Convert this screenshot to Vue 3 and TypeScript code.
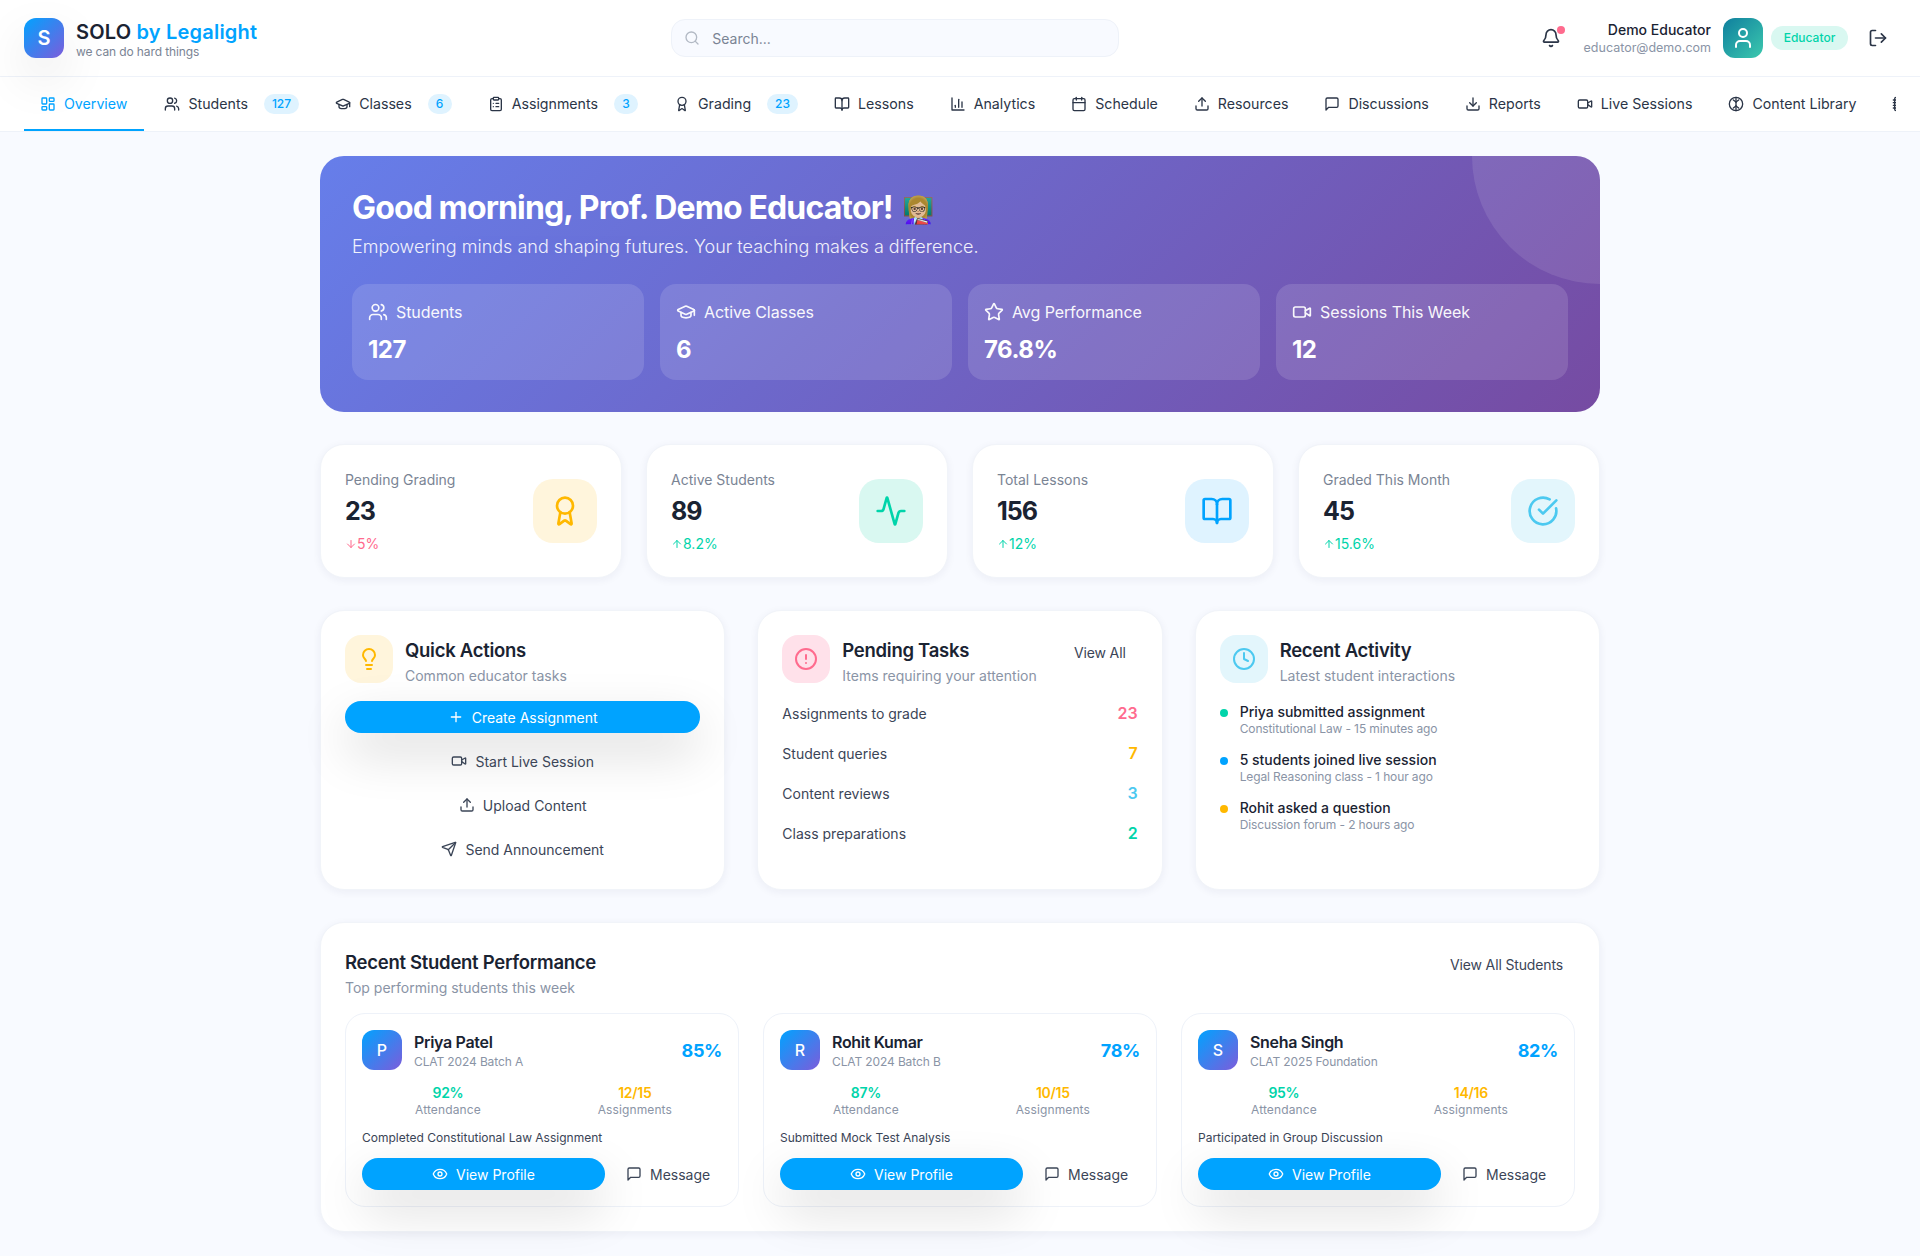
<script setup lang="ts">
import { h } from 'vue'

const icons: Record<string, string> = {
  dashboard: '<rect width="7" height="9" x="3" y="3" rx="1"/><rect width="7" height="5" x="14" y="3" rx="1"/><rect width="7" height="9" x="14" y="12" rx="1"/><rect width="7" height="5" x="3" y="16" rx="1"/>',
  users: '<path d="M16 21v-2a4 4 0 0 0-4-4H6a4 4 0 0 0-4 4v2"/><circle cx="9" cy="7" r="4"/><path d="M22 21v-2a4 4 0 0 0-3-3.87"/><path d="M16 3.13a4 4 0 0 1 0 7.75"/>',
  cap: '<path d="M21.42 10.922a1 1 0 0 0-.019-1.838L12.83 5.18a2 2 0 0 0-1.66 0L2.6 9.08a1 1 0 0 0 0 1.832l8.57 3.908a2 2 0 0 0 1.66 0z"/><path d="M22 10v6"/><path d="M6 12.5V16a6 3 0 0 0 12 0v-3.5"/>',
  clipboard: '<rect width="8" height="4" x="8" y="2" rx="1" ry="1"/><path d="M16 4h2a2 2 0 0 1 2 2v14a2 2 0 0 1-2 2H6a2 2 0 0 1-2-2V6a2 2 0 0 1 2-2h2"/><path d="M12 11h4"/><path d="M12 16h4"/><path d="M8 11h.01"/><path d="M8 16h.01"/>',
  award: '<path d="m15.477 12.89 1.515 8.526a.5.5 0 0 1-.81.47l-3.58-2.687a1 1 0 0 0-1.197 0l-3.586 2.686a.5.5 0 0 1-.81-.469l1.514-8.526"/><circle cx="12" cy="8" r="6"/>',
  book: '<path d="M12 7v14"/><path d="M3 18a1 1 0 0 1-1-1V4a1 1 0 0 1 1-1h5a4 4 0 0 1 4 4 4 4 0 0 1 4-4h5a1 1 0 0 1 1 1v13a1 1 0 0 1-1 1h-6a3 3 0 0 0-3 3 3 3 0 0 0-3-3z"/>',
  chart: '<path d="M3 3v18h18"/><path d="M18 17V9"/><path d="M13 17V5"/><path d="M8 17v-3"/>',
  calendar: '<path d="M8 2v4"/><path d="M16 2v4"/><rect width="18" height="18" x="3" y="4" rx="2"/><path d="M3 10h18"/>',
  upload: '<path d="M21 15v4a2 2 0 0 1-2 2H5a2 2 0 0 1-2-2v-4"/><path d="m17 8-5-5-5 5"/><path d="M12 3v12"/>',
  message: '<path d="M21 15a2 2 0 0 1-2 2H7l-4 4V5a2 2 0 0 1 2-2h14a2 2 0 0 1 2 2z"/>',
  download: '<path d="M21 15v4a2 2 0 0 1-2 2H5a2 2 0 0 1-2-2v-4"/><path d="m7 10 5 5 5-5"/><path d="M12 15V3"/>',
  video: '<path d="m16 13 5.223 3.482a.5.5 0 0 0 .777-.416V7.87a.5.5 0 0 0-.752-.432L16 10.5"/><rect x="2" y="6" width="14" height="12" rx="2"/>',
  brain: '<circle cx="12" cy="12" r="10"/><path d="M12 2v20"/><path d="m12 9-4-3"/><path d="m12 9 4-3"/><path d="m12 15-4 3"/><path d="m12 15 4 3"/>',
  notebook: '<path d="M2 6h4"/><path d="M2 10h4"/><path d="M2 14h4"/><path d="M2 18h4"/><rect width="16" height="20" x="4" y="2" rx="2"/>',
  bell: '<path d="M10.268 21a2 2 0 0 0 3.464 0"/><path d="M3.262 15.326A1 1 0 0 0 4 17h16a1 1 0 0 0 .74-1.673C19.41 13.956 18 12.499 18 8A6 6 0 0 0 6 8c0 4.499-1.411 5.956-2.738 7.326"/>',
  search: '<circle cx="11" cy="11" r="8"/><path d="m21 21-4.3-4.3"/>',
  user: '<path d="M19 21v-2a4 4 0 0 0-4-4H9a4 4 0 0 0-4 4v2"/><circle cx="12" cy="7" r="4"/>',
  logout: '<path d="M9 21H5a2 2 0 0 1-2-2V5a2 2 0 0 1 2-2h4"/><path d="m16 17 5-5-5-5"/><path d="M21 12H9"/>',
  star: '<path d="M11.525 2.295a.53.53 0 0 1 .95 0l2.31 4.679a2.123 2.123 0 0 0 1.595 1.16l5.166.756a.53.53 0 0 1 .294.904l-3.736 3.638a2.123 2.123 0 0 0-.611 1.878l.882 5.14a.53.53 0 0 1-.771.56l-4.618-2.428a2.122 2.122 0 0 0-1.973 0L6.396 21.01a.53.53 0 0 1-.77-.56l.881-5.139a2.122 2.122 0 0 0-.611-1.879L2.16 9.795a.53.53 0 0 1 .294-.906l5.165-.755a2.122 2.122 0 0 0 1.597-1.16z"/>',
  activity: '<path d="M22 12h-2.48a2 2 0 0 0-1.93 1.46l-2.35 8.36a.25.25 0 0 1-.48 0L9.24 2.18a.25.25 0 0 0-.48 0l-2.35 8.36A2 2 0 0 1 4.49 12H2"/>',
  check: '<path d="M21.801 10A10 10 0 1 1 17 3.335"/><path d="m9 11 3 3L22 4"/>',
  bulb: '<path d="M15 14c.2-1 .7-1.7 1.5-2.5 1-.9 1.5-2.2 1.5-3.5A6 6 0 0 0 6 8c0 1 .2 2.2 1.5 3.5.7.7 1.3 1.5 1.5 2.5"/><path d="M9 18h6"/><path d="M10 22h4"/>',
  alert: '<circle cx="12" cy="12" r="10"/><path d="M12 8v4"/><path d="M12 16h.01"/>',
  clock: '<circle cx="12" cy="12" r="10"/><path d="M12 6v6l4 2"/>',
  plus: '<path d="M5 12h14"/><path d="M12 5v14"/>',
  send: '<path d="M14.536 21.686a.5.5 0 0 0 .937-.024l6.5-19a.496.496 0 0 0-.635-.635l-19 6.5a.5.5 0 0 0-.024.937l7.93 3.18a2 2 0 0 1 1.112 1.11z"/><path d="m21.854 2.147-10.94 10.939"/>',
  eye: '<path d="M2.062 12.348a1 1 0 0 1 0-.696 10.75 10.75 0 0 1 19.876 0 1 1 0 0 1 0 .696 10.75 10.75 0 0 1-19.876 0"/><circle cx="12" cy="12" r="3"/>',
  up: '<path d="m5 12 7-7 7 7"/><path d="M12 19V5"/>',
  down: '<path d="M12 5v14"/><path d="m19 12-7 7-7-7"/>',
}

// small inline icon, same 24 grid for all of them
const Icon = (props: { name: string; size?: number }) =>
  h('svg', {
    width: props.size ?? 16,
    height: props.size ?? 16,
    viewBox: '0 0 24 24',
    fill: 'none',
    stroke: 'currentColor',
    'stroke-width': 2,
    'stroke-linecap': 'round',
    'stroke-linejoin': 'round',
    style: 'flex:none;display:block',
    innerHTML: icons[props.name],
  })
Icon.props = ['name', 'size']

const tabs = [
  { label: 'Overview', icon: 'dashboard', active: true },
  { label: 'Students', icon: 'users', badge: '127' },
  { label: 'Classes', icon: 'cap', badge: '6' },
  { label: 'Assignments', icon: 'clipboard', badge: '3' },
  { label: 'Grading', icon: 'award', badge: '23' },
  { label: 'Lessons', icon: 'book' },
  { label: 'Analytics', icon: 'chart' },
  { label: 'Schedule', icon: 'calendar' },
  { label: 'Resources', icon: 'upload' },
  { label: 'Discussions', icon: 'message' },
  { label: 'Reports', icon: 'download' },
  { label: 'Live Sessions', icon: 'video' },
  { label: 'Content Library', icon: 'brain' },
  { label: '', icon: 'notebook' },
]

const heroStats = [
  { label: 'Students', value: '127', icon: 'users' },
  { label: 'Active Classes', value: '6', icon: 'cap' },
  { label: 'Avg Performance', value: '76.8%', icon: 'star' },
  { label: 'Sessions This Week', value: '12', icon: 'video' },
]

const stats = [
  { label: 'Pending Grading', value: '23', change: '5%', up: false, icon: 'award', tone: 'yellow' },
  { label: 'Active Students', value: '89', change: '8.2%', up: true, icon: 'activity', tone: 'green' },
  { label: 'Total Lessons', value: '156', change: '12%', up: true, icon: 'book', tone: 'blue' },
  { label: 'Graded This Month', value: '45', change: '15.6%', up: true, icon: 'check', tone: 'sky' },
]

const actions = [
  { label: 'Start Live Session', icon: 'video' },
  { label: 'Upload Content', icon: 'upload' },
  { label: 'Send Announcement', icon: 'send' },
]

const tasks = [
  { label: 'Assignments to grade', count: 23, tone: 'pink' },
  { label: 'Student queries', count: 7, tone: 'yellow' },
  { label: 'Content reviews', count: 3, tone: 'sky' },
  { label: 'Class preparations', count: 2, tone: 'green' },
]

const activity = [
  { title: 'Priya submitted assignment', sub: 'Constitutional Law - 15 minutes ago', dot: '#00d4aa' },
  { title: '5 students joined live session', sub: 'Legal Reasoning class - 1 hour ago', dot: '#00a3ff' },
  { title: 'Rohit asked a question', sub: 'Discussion forum - 2 hours ago', dot: '#ffb800' },
]

const students = [
  { initial: 'P', name: 'Priya Patel', batch: 'CLAT 2024 Batch A', score: '85%', attendance: '92%', done: '12/15', note: 'Completed Constitutional Law Assignment' },
  { initial: 'R', name: 'Rohit Kumar', batch: 'CLAT 2024 Batch B', score: '78%', attendance: '87%', done: '10/15', note: 'Submitted Mock Test Analysis' },
  { initial: 'S', name: 'Sneha Singh', batch: 'CLAT 2025 Foundation', score: '82%', attendance: '95%', done: '14/16', note: 'Participated in Group Discussion' },
]
</script>

<template>
  <div class="page">
    <header class="topbar">
      <div class="brand">
        <div class="brand-mark">S</div>
        <div class="brand-text">
          <div class="brand-name">SOLO <span>by Legalight</span></div>
          <div class="brand-tag">we can do hard things</div>
        </div>
      </div>

      <div class="search">
        <Icon name="search" :size="16" />
        <span>Search...</span>
      </div>

      <div class="account">
        <div class="bell">
          <Icon name="bell" :size="20" />
          <i></i>
        </div>
        <div class="who">
          <div class="who-name">Demo Educator</div>
          <div class="who-mail">educator@demo.com</div>
        </div>
        <div class="who-avatar"><Icon name="user" :size="24" /></div>
        <div class="role">Educator</div>
        <button type="button" class="logout"><Icon name="logout" :size="20" /></button>
      </div>
    </header>

    <nav class="tabs">
      <div class="tabs-inner">
        <a v-for="tab in tabs" :key="tab.icon" class="tab" :class="{ active: tab.active }">
          <Icon :name="tab.icon" :size="16" />
          <span v-if="tab.label">{{ tab.label }}</span>
          <b v-if="tab.badge" class="tab-badge">{{ tab.badge }}</b>
        </a>
      </div>
    </nav>

    <main class="content">
      <section class="hero">
        <h1>Good morning, Prof. Demo Educator! <span class="wave">👩🏼‍🏫</span></h1>
        <p>Empowering minds and shaping futures. Your teaching makes a difference.</p>
        <div class="hero-stats">
          <div v-for="item in heroStats" :key="item.label" class="hero-stat">
            <div class="hero-label"><Icon :name="item.icon" :size="20" />{{ item.label }}</div>
            <div class="hero-value">{{ item.value }}</div>
          </div>
        </div>
      </section>

      <section class="stat-row">
        <div v-for="stat in stats" :key="stat.label" class="card stat">
          <div>
            <div class="stat-label">{{ stat.label }}</div>
            <div class="stat-value">{{ stat.value }}</div>
            <div class="stat-change" :class="stat.up ? 'up' : 'down'">
              <Icon :name="stat.up ? 'up' : 'down'" :size="12" />{{ stat.change }}
            </div>
          </div>
          <div class="stat-icon" :class="stat.tone"><Icon :name="stat.icon" :size="32" /></div>
        </div>
      </section>

      <section class="three">
        <div class="card panel">
          <div class="panel-head">
            <div class="panel-icon yellow"><Icon name="bulb" :size="24" /></div>
            <div>
              <h3>Quick Actions</h3>
              <p>Common educator tasks</p>
            </div>
          </div>
          <div class="action-list">
            <button type="button" class="btn primary"><Icon name="plus" :size="16" />Create Assignment</button>
            <button v-for="a in actions" :key="a.label" type="button" class="btn ghost">
              <Icon :name="a.icon" :size="16" />{{ a.label }}
            </button>
          </div>
        </div>

        <div class="card panel">
          <div class="panel-head">
            <div class="panel-icon pink"><Icon name="alert" :size="24" /></div>
            <div class="grow">
              <h3>Pending Tasks</h3>
              <p>Items requiring your attention</p>
            </div>
            <button type="button" class="btn link">View All</button>
          </div>
          <div class="task-list">
            <div v-for="t in tasks" :key="t.label" class="task">
              <span>{{ t.label }}</span>
              <b class="count" :class="t.tone">{{ t.count }}</b>
            </div>
          </div>
        </div>

        <div class="card panel">
          <div class="panel-head">
            <div class="panel-icon sky"><Icon name="clock" :size="24" /></div>
            <div>
              <h3>Recent Activity</h3>
              <p>Latest student interactions</p>
            </div>
          </div>
          <div class="activity-list">
            <div v-for="a in activity" :key="a.title" class="activity">
              <i :style="{ background: a.dot }"></i>
              <div>
                <div class="activity-title">{{ a.title }}</div>
                <div class="activity-sub">{{ a.sub }}</div>
              </div>
            </div>
          </div>
        </div>
      </section>

      <section class="card panel">
        <div class="panel-head">
          <div class="grow">
            <h3>Recent Student Performance</h3>
            <p>Top performing students this week</p>
          </div>
          <button type="button" class="btn link">View All Students</button>
        </div>
        <div class="student-grid">
          <div v-for="s in students" :key="s.name" class="student">
            <div class="student-top">
              <div class="student-avatar">{{ s.initial }}</div>
              <div class="grow">
                <div class="student-name">{{ s.name }}</div>
                <div class="student-batch">{{ s.batch }}</div>
              </div>
              <div class="student-score">{{ s.score }}</div>
            </div>
            <div class="student-stats">
              <div>
                <b class="green">{{ s.attendance }}</b>
                <span>Attendance</span>
              </div>
              <div>
                <b class="yellow">{{ s.done }}</b>
                <span>Assignments</span>
              </div>
            </div>
            <div class="student-note">{{ s.note }}</div>
            <div class="student-actions">
              <button type="button" class="btn primary"><Icon name="eye" :size="16" />View Profile</button>
              <button type="button" class="btn message"><Icon name="message" :size="16" />Message</button>
            </div>
          </div>
        </div>
      </section>
    </main>
  </div>
</template>

<style>
body {
  background: #f8faff;
}
</style>

<style scoped>
.page {
  font-family: Inter, "Noto Sans", sans-serif;
  font-size: 14px;
  line-height: 1.5;
  color: #1a2332;
}

.grow {
  flex: 1;
  min-width: 0;
}

.topbar {
  display: flex;
  align-items: center;
  justify-content: space-between;
  height: 76px;
  padding: 0 24px;
  background: #fff;
  border-bottom: 1px solid #eef2f9;
  box-sizing: content-box;
}

.brand {
  display: flex;
  align-items: center;
  gap: 12px;
  width: 234px;
}

.brand-mark {
  width: 40px;
  height: 40px;
  flex: none;
  border-radius: 12px;
  background: linear-gradient(135deg, #00a3ff, #7c5cdb);
  color: #fff;
  font-size: 20px;
  font-weight: 600;
  display: flex;
  align-items: center;
  justify-content: center;
  box-shadow: 0 20px 50px rgba(0, 0, 0, 0.1);
}

.brand-text {
  margin-top: 3px;
}

.brand-name {
  font-size: 20px;
  line-height: 24px;
  font-weight: 600;
  letter-spacing: 0.01em;
}

.brand-name span {
  color: #00a3ff;
}

.brand-tag {
  font-size: 12px;
  line-height: 16px;
  letter-spacing: -0.01em;
  color: #7a8494;
}

.search {
  display: flex;
  align-items: center;
  gap: 12px;
  width: 448px;
  height: 38px;
  padding: 0 12px;
  box-sizing: border-box;
  background: #f8faff;
  border: 1px solid #eef2f9;
  border-radius: 14px;
  color: #7a8494;
  margin-left: -8px;
}

.search svg {
  color: #b2b9c4;
}

.account {
  display: flex;
  align-items: center;
}

.bell {
  position: relative;
  color: #2b3547;
  margin-right: 23px;
}

.bell i {
  position: absolute;
  top: -2px;
  right: -4px;
  width: 8px;
  height: 8px;
  border-radius: 50%;
  background: #ff6b8e;
}

.who {
  text-align: right;
  margin-right: 12px;
}

.who-name {
  font-weight: 500;
  line-height: 20px;
}

.who-mail {
  font-size: 12.5px;
  line-height: 16px;
  color: #8a94a6;
}

.who-avatar {
  width: 40px;
  height: 40px;
  border-radius: 12px;
  background: linear-gradient(135deg, #0f7f9e, #3cc9ae);
  color: #fff;
  display: flex;
  align-items: center;
  justify-content: center;
  margin-right: 8px;
}

.role {
  width: 77px;
  height: 24px;
  line-height: 24px;
  text-align: center;
  border-radius: 12px;
  background: #d9f8f1;
  color: #00d4aa;
  font-size: 12px;
  font-weight: 500;
  margin-right: 20px;
}

.logout {
  border: 0;
  background: transparent;
  padding: 0;
  margin-right: 8px;
  color: #2b3547;
}

.tabs {
  background: #fff;
  border-bottom: 1px solid #eef2f9;
  padding: 0 24px;
}

.tabs-inner {
  display: flex;
  gap: 4px;
  overflow: hidden;
  height: 54px;
}

.tab {
  display: flex;
  align-items: center;
  gap: 8px;
  flex: none;
  padding: 2px 16px 0;
  font-size: 14.2px;
  color: #2b3547;
  border-bottom: 2px solid transparent;
  box-sizing: border-box;
}

.tab:first-child {
  padding-right: 17px;
}

.tab.active {
  color: #00a3ff;
  border-bottom-color: #00a3ff;
}

.tab-badge {
  display: block;
  margin-left: 8px;
  min-width: 24px;
  height: 20px;
  line-height: 20px;
  padding: 0 8px;
  box-sizing: border-box;
  text-align: center;
  font-size: 12px;
  font-weight: 500;
  color: #00a3ff;
  background: #dff3ff;
  border-radius: 10px;
}

.content {
  width: 1280px;
  margin: 0 auto;
  padding: 24px 0;
  display: flex;
  flex-direction: column;
  gap: 32px;
}

.hero {
  position: relative;
  overflow: hidden;
  padding: 32px;
  height: 256px;
  box-sizing: border-box;
  border-radius: 24px;
  color: #fff;
  background: linear-gradient(135deg, #667eea, #764ba2);
}

.hero::before {
  content: "";
  position: absolute;
  top: -128px;
  right: -128px;
  width: 256px;
  height: 256px;
  border-radius: 50%;
  background: rgba(255, 255, 255, 0.1);
}

.hero h1 {
  position: relative;
  height: 38px;
  margin: 0;
  padding-top: 1px;
  margin-bottom: -1px;
  font-size: 32px;
  line-height: 38px;
  font-weight: 700;
  letter-spacing: -0.88px;
}

.wave {
  font-size: 26px;
  line-height: 1;
  letter-spacing: 0;
  margin-left: 3px;
}

.hero p {
  position: relative;
  margin: 7px 0 0;
  font-size: 18px;
  line-height: 27px;
  font-weight: 300;
  opacity: 0.9;
}

.hero-stats {
  position: relative;
  display: grid;
  grid-template-columns: repeat(4, 1fr);
  gap: 16px;
  margin-top: 24px;
}

.hero-stat {
  padding: 16px;
  border-radius: 16px;
  background: rgba(255, 255, 255, 0.13);
}

.hero-label {
  display: flex;
  align-items: center;
  gap: 8px;
  font-size: 16px;
  line-height: 24px;
  letter-spacing: -0.005em;
  opacity: 0.95;
}

.hero-value {
  margin-top: 10px;
  margin-bottom: -1px;
  font-size: 24px;
  line-height: 31px;
  font-weight: 700;
  letter-spacing: -0.02em;
}

.card {
  background: #fff;
  border: 1px solid #f1f4f9;
  border-radius: 24px;
  box-shadow: 0 2px 8px rgba(30, 40, 80, 0.06);
}

.stat-row {
  display: grid;
  grid-template-columns: repeat(4, 1fr);
  gap: 24px;
}

.stat {
  display: flex;
  align-items: center;
  justify-content: space-between;
  padding: 24px;
}

.stat-label {
  color: #7a8494;
}

.stat-value {
  margin-top: 2px;
  font-size: 25px;
  line-height: 39px;
  font-weight: 700;
  letter-spacing: -0.04em;
}

.stat-change {
  display: flex;
  align-items: center;
  gap: 0;
  margin-top: 3px;
  line-height: 19px;
}

.stat-change.up {
  color: #00d4aa;
}

.stat-change.down {
  color: #ff6b8e;
}

.stat-icon {
  width: 64px;
  height: 64px;
  border-radius: 20px;
  display: flex;
  align-items: center;
  justify-content: center;
}

.three {
  display: grid;
  grid-template-columns: repeat(3, 1fr);
  gap: 32px;
}

.panel {
  padding: 24px;
}

.panel-head {
  display: flex;
  align-items: flex-start;
  gap: 12px;
  margin-bottom: 15px;
}

.panel-head h3 {
  margin: 1px 0 0;
  font-size: 18.5px;
  line-height: 28px;
  font-weight: 600;
  letter-spacing: -0.015em;
}

.panel-head p {
  margin: 1px 0 0;
  line-height: 21px;
  color: #8a94a6;
}

.panel-icon {
  width: 48px;
  height: 48px;
  border-radius: 16px;
  display: flex;
  align-items: center;
  justify-content: center;
}

.yellow { color: #ffb800; }
.green { color: #00d4aa; }
.blue { color: #00a3ff; }
.sky { color: #4cc9f0; }
.pink { color: #ff6b8e; }

.stat-icon.yellow, .panel-icon.yellow { background: #fff5dc; }
.stat-icon.green { background: #d9f8f1; }
.stat-icon.blue { background: #dff3ff; }
.stat-icon.sky, .panel-icon.sky { background: #e3f6fc; }
.panel-icon.pink { background: #ffe1ea; }

.btn {
  display: flex;
  align-items: center;
  justify-content: center;
  gap: 8px;
  height: 32px;
  border: 0;
  border-radius: 16px;
  background: transparent;
  font: inherit;
  color: #3b4557;
  padding: 0;
}

.btn.primary {
  background: #00a3ff;
  color: #fff;
  box-shadow: 0 20px 50px rgba(0, 0, 0, 0.15);
}

.btn.link {
  padding: 0 12px;
  margin-top: 1px;
  letter-spacing: -0.01em;
}

.action-list {
  display: flex;
  flex-direction: column;
  gap: 12px;
}

.task-list {
  display: flex;
  flex-direction: column;
  gap: 14px;
  margin-top: -1px;
}

.task {
  display: flex;
  align-items: center;
  justify-content: space-between;
  height: 26px;
  color: #3b4557;
}

.count {
  font-size: 16px;
  font-weight: 600;
}

.activity-list {
  display: flex;
  flex-direction: column;
  gap: 13px;
}

.activity {
  display: flex;
  gap: 12px;
}

.activity i {
  flex: none;
  width: 8px;
  height: 8px;
  margin-top: 8px;
  border-radius: 50%;
}

.activity-title {
  font-weight: 500;
  line-height: 21px;
}

.activity-sub {
  margin-top: -1px;
  font-size: 12px;
  line-height: 15px;
  letter-spacing: -0.01em;
  color: #8a94a6;
}

.student-grid {
  display: grid;
  grid-template-columns: repeat(3, 1fr);
  gap: 24px;
}

.student {
  padding: 16px;
  border: 1px solid #eef2f9;
  border-radius: 20px;
}

.student-top {
  display: flex;
  align-items: center;
  gap: 12px;
}

.student-avatar {
  width: 40px;
  height: 40px;
  flex: none;
  border-radius: 12px;
  background: linear-gradient(135deg, #00a3ff, #7c5cdb);
  color: #fff;
  font-size: 16px;
  font-weight: 500;
  display: flex;
  align-items: center;
  justify-content: center;
}

.student-name {
  font-size: 16px;
  line-height: 24px;
  font-weight: 600;
  letter-spacing: -0.02em;
}

.student-batch {
  font-size: 12px;
  line-height: 16px;
  letter-spacing: -0.01em;
  color: #8a94a6;
}

.student-score {
  font-size: 18px;
  font-weight: 700;
  letter-spacing: -0.02em;
  color: #00a3ff;
}

.student-stats {
  display: flex;
  justify-content: space-between;
  margin-top: 12px;
  padding: 0 50px 0 53px;
  text-align: center;
}

.student-stats b {
  display: block;
  font-size: 14px;
  line-height: 21px;
  font-weight: 600;
  letter-spacing: -0.02em;
}

.student-stats span {
  display: block;
  margin-top: -1px;
  font-size: 12px;
  line-height: 15px;
  letter-spacing: 0.01em;
  color: #8a94a6;
}

.student-note {
  margin-top: 12px;
  font-size: 12px;
  line-height: 18px;
  color: #3b4557;
}

.student-actions {
  display: flex;
  margin-top: 11px;
}

.student-actions .primary {
  flex: 1;
}

.btn.message {
  width: 117px;
  flex: none;
  justify-content: flex-start;
  padding-left: 21px;
  box-sizing: border-box;
}
</style>
